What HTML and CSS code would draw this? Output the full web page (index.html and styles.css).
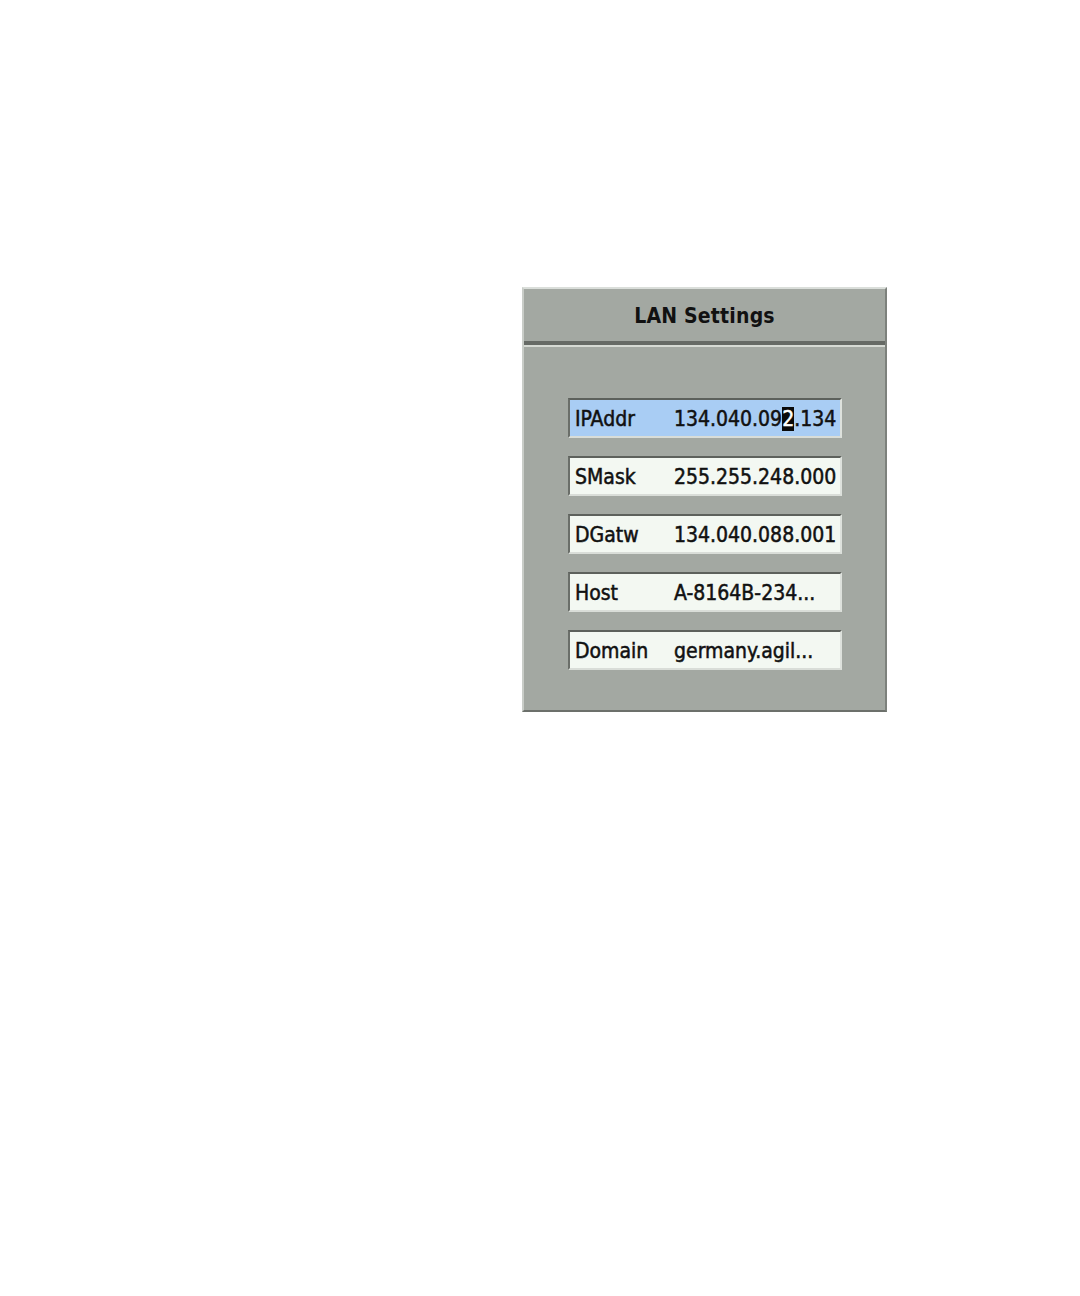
FILE: index.html
```html
<!DOCTYPE html>
<html>
<head>
<meta charset="utf-8">
<link rel="stylesheet" href="styles.css">
</head>
<body>
<div class="panel">
  <div class="header">LAN Settings</div>
  <div class="body">
    <div class="field selected"><span class="label">IPAddr</span><span class="value">134.040.09<span class="cursor">2</span>.134</span></div>
    <div class="field"><span class="label">SMask</span><span class="value">255.255.248.000</span></div>
    <div class="field"><span class="label">DGatw</span><span class="value">134.040.088.001</span></div>
    <div class="field"><span class="label">Host</span><span class="value">A-8164B-234...</span></div>
    <div class="field"><span class="label">Domain</span><span class="value">germany.agil...</span></div>
  </div>
</div>
</body>
</html>
```
FILE: styles.css
```css
html, body {
  margin: 0;
  padding: 0;
  background: #ffffff;
}
body {
  font-family: "DejaVu Sans Condensed", "DejaVu Sans", sans-serif;
  font-stretch: condensed;
  color: #111;
}
.panel {
  margin: 287px 0 0 522px;
  width: 365px;
  box-sizing: border-box;
  background: #a3a8a2;
  border-top: 2px solid #dadeda;
  border-left: 2px solid #c9cdc8;
  border-right: 2px solid #7d817c;
  border-bottom: 2px solid #6c706b;
}
.header {
  height: 56px;
  box-sizing: border-box;
  display: flex;
  align-items: center;
  justify-content: center;
  font-size: 21px;
  font-weight: bold;
  letter-spacing: 0.2px;
  padding-top: 1px;
  border-bottom: 4px solid #666a65;
  box-shadow: 0 2px 0 #d6dad4;
}
.body {
  padding: 53px 0 40px 44px;
  display: flex;
  flex-direction: column;
  gap: 18px;
}
.field {
  width: 274px;
  height: 40px;
  box-sizing: border-box;
  display: flex;
  align-items: center;
  background: #f3f8f2;
  border-top: 2px solid #5d615c;
  border-left: 2px solid #6a6e69;
  border-right: 2px solid #dde1dc;
  border-bottom: 2px solid #d9ddd8;
  font-size: 21px;
  padding-left: 5px;
  padding-top: 1px;
  -webkit-text-stroke: 0.5px #111;
}
.field.selected {
  background: #a9cdf4;
}
.label {
  width: 99px;
  flex: none;
}
.cursor {
  background: #0a0a0a;
  color: #ffffff;
  -webkit-text-stroke: 0.5px #ffffff;
}
```
